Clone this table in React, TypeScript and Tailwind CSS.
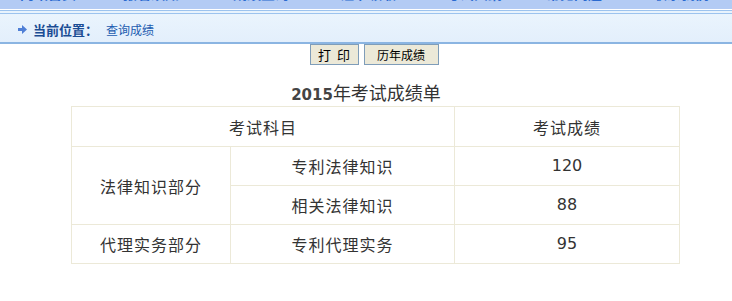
const navItems = [
  { label: '网站首页', w: 'w-[103px]' },
  { label: '报名须知', w: 'w-[110px]' },
  { label: '成绩查询', w: 'w-[107px]' },
  { label: '证书领取', w: 'w-[106px]' },
  { label: '考试大纲', w: 'w-[100px]' },
  { label: '常见问题', w: 'w-[107px]' },
  { label: '联系我们', w: 'w-[70px]' },
];

const rows = [
  { group: '法律知识部分', span: 2, subject: '专利法律知识', score: '120' },
  { subject: '相关法律知识', score: '88' },
  { group: '代理实务部分', span: 1, subject: '专利代理实务', score: '95' },
];

const cjk = "font-['SimSun','Noto_Sans_CJK_SC',sans-serif]";
const num = "font-['Verdana','DejaVu_Sans',sans-serif]";

export default function App() {
  return (
    <div className={`w-[732px] h-[301px] bg-white overflow-hidden ${cjk}`}>
      {/* top menu, only its lower edge is in view */}
      <div className="h-[9px] bg-[#b3cbf4] overflow-hidden">
        <div className="flex pl-[20px] -mt-[17px] text-[14px] font-bold leading-[20px] text-[#2a6ad0]">
          {navItems.map((n) => (
            <span key={n.label} className={`shrink-0 ${n.w}`}>
              {n.label}
            </span>
          ))}
        </div>
      </div>
      <div className="h-px bg-white" />
      <div className="h-px bg-[#9cc3ee]" />
      <div className="h-[2px] bg-[#e8f3fd]" />
      <div className="h-px bg-[#9cc3ee]" />

      {/* breadcrumb */}
      <div className="h-[30px] flex items-center pl-[18px] pt-[3px] bg-gradient-to-b from-[#eaf4fd] to-[#e3effc] border-b-2 border-[#8bb5e2]">
        <svg width="9" height="9" viewBox="0 0 9 9" className="mr-[6px]">
          <path d="M0 3h4V0l5 4.5L4 9V6H0z" fill="#4f7fd6" />
        </svg>
        <span className="text-[13px] font-bold text-[#1a4c94]">当前位置：</span>
        <span className="ml-[8px] text-[12px] text-[#1d5cb0]">查询成绩</span>
      </div>

      {/* actions */}
      <div className="flex justify-center gap-[5px] ml-[16px]">
        <button className="w-[49px] h-[21px] bg-[#ece9d8] border border-[#7f9db9] text-[13px] text-black leading-none">
          打&nbsp;&nbsp;印
        </button>
        <button className="w-[75px] h-[21px] bg-[#ece9d8] border border-[#7f9db9] text-[12px] text-black leading-none">
          历年成绩
        </button>
      </div>

      <div className="mt-[17px] text-center text-[18px] leading-[20px] text-[#333]">
        <span className={`${num} font-bold text-[15px] text-[#444]`}>2015</span>年考试成绩单
      </div>

      <table className="mt-[1px] ml-[71px] w-[608px] border-collapse text-[16px] text-[#333] table-fixed">
        <colgroup>
          <col className="w-[159px]" />
          <col className="w-[224px]" />
          <col className="w-[225px]" />
        </colgroup>
        <thead>
          <tr className="h-[40px]">
            <th colSpan={2} className="border border-[#ece9d8] font-normal tracking-[1px]">考试科目</th>
            <th className="border border-[#ece9d8] font-normal tracking-[1px]">考试成绩</th>
          </tr>
        </thead>
        <tbody>
          {rows.map((r) => (
            <tr key={r.subject} className="h-[39px]">
              {r.group && (
                <td rowSpan={r.span} className="border border-[#ece9d8] text-center tracking-[1px]">
                  {r.group}
                </td>
              )}
              <td className="border border-[#ece9d8] text-center tracking-[1px]">{r.subject}</td>
              <td className={`border border-[#ece9d8] text-center ${num} text-[16px]`}>
                {r.score}
              </td>
            </tr>
          ))}
        </tbody>
      </table>
    </div>
  );
}
